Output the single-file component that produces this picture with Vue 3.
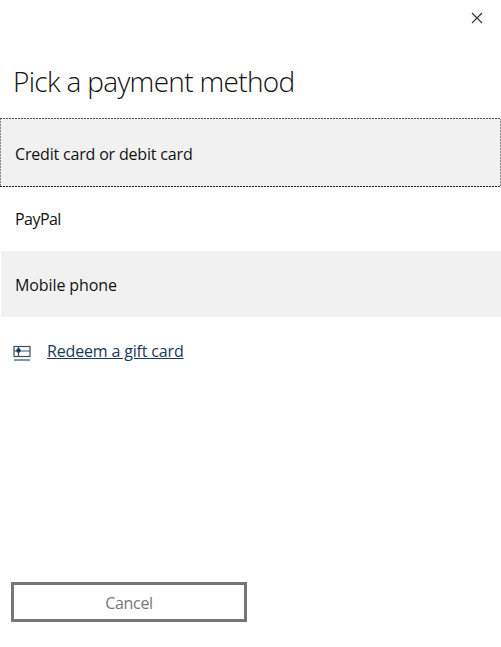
<script setup>
const methods = [
  { label: 'Credit card or debit card', name: 'card', shaded: true, focused: true },
  { label: 'PayPal', name: 'paypal' },
  { label: 'Mobile phone', name: 'mobile', shaded: true },
]
</script>

<template>
  <main class="dialog">
    <header class="top">
      <button class="close" aria-label="Close">
        <svg width="12" height="12" viewBox="0 0 12 12"><path d="M1 1L11 11M11 1L1 11" /></svg>
      </button>
    </header>
    <h1><span>Pick a payment method</span></h1>
    <ul class="methods">
      <li v-for="m in methods" :key="m.name" :class="[m.name, { shaded: m.shaded, focused: m.focused }]">
        <span>{{ m.label }}</span>
      </li>
    </ul>
    <a class="redeem">
      <svg width="18" height="17" viewBox="0 0 18 17">
        <rect x="1" y="1.5" width="16" height="10" class="line" />
        <path d="M1 6H17M5.5 1.5V11.5" class="line" />
        <circle cx="5.5" cy="5.5" r="2.2" class="bow" />
        <path d="M1 15H17" class="base" />
      </svg>
      <span>Redeem a gift card</span>
    </a>
    <button class="cancel"><span>Cancel</span></button>
  </main>
</template>

<style>
body { background: #fff; }
</style>

<style scoped>
.dialog {
  box-sizing: border-box;
  width: 501px;
  height: 647px;
  display: flex;
  flex-direction: column;
  background: #fff;
  color: #111;
  font-family: "Open Sans", "Noto Sans", sans-serif;
  overflow: hidden;
}
.top {
  height: 59px;
  display: flex;
  justify-content: flex-end;
  padding: 12px 18px 0 0;
  box-sizing: border-box;
}
.close {
  width: 12px;
  height: 12px;
  padding: 0;
  border: 0;
  background: none;
}
.close svg { display: block; }
.close path { stroke: #333; stroke-width: 1.1; }
h1 {
  margin: 0;
  height: 60px;
  padding-left: 13px;
  font-size: 28px;
  line-height: 44px;
  font-weight: 300;
  letter-spacing: -0.67px;
  white-space: nowrap;
}
.methods {
  margin: 0;
  padding: 0;
  list-style: none;
}
.methods li {
  box-sizing: border-box;
  height: 66px;
  margin-left: 1px;
  padding: 2px 14px 0;
  display: flex;
  align-items: center;
  font-size: 16px;
  line-height: 22px;
  letter-spacing: -0.1px;
}
.methods .shaded { background-color: #f1f1f1; }
.methods .focused {
  height: 69px;
  margin: -1px 0 -2px;
  padding-left: 15px;
  letter-spacing: -0.18px;
  background-image:
    repeating-linear-gradient(90deg, #555 0 2px, #ddd 2px 3px),
    repeating-linear-gradient(90deg, #222 0 2px, #ddd 2px 3px),
    repeating-linear-gradient(180deg, #888 0 2px, #ddd 2px 3px),
    repeating-linear-gradient(180deg, #888 0 2px, #ddd 2px 3px);
  background-size: 100% 1px, 100% 1px, 1px 100%, 1px 100%;
  background-position: 0 0, 0 100%, 0 0, 100% 0;
  background-repeat: no-repeat;
}
.methods .paypal { letter-spacing: -0.55px; }
.redeem {
  height: 66px;
  display: flex;
  align-items: center;
  gap: 16px;
  padding: 2px 0 0 13px;
  box-sizing: border-box;
  color: #17395a;
  font-size: 16px;
  letter-spacing: -0.16px;
}
.redeem span { text-decoration: underline; }
.redeem svg { margin-top: 4px; }
.line { fill: none; stroke: #35536d; stroke-width: 1.2; }
.bow { fill: #17395a; }
.base { stroke: #5b7287; stroke-width: 1.5; }
.cancel {
  box-sizing: border-box;
  width: 236px;
  height: 40px;
  margin: auto 0 25px 11px;
  padding: 2px 0 0;
  border: 3px solid #767676;
  background: #fff;
  color: #777;
  font: 400 16px/22px "Open Sans", sans-serif;
  letter-spacing: -0.3px;
}
</style>
